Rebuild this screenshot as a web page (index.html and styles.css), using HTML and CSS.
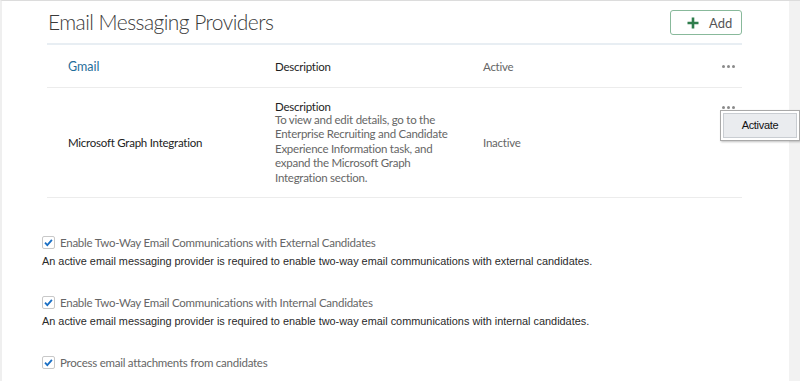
FILE: index.html
```html
<!DOCTYPE html>
<html>
  <head>
    <meta charset="utf-8" />
    <title>Email Messaging Providers</title>
    <link rel="stylesheet" href="styles.css">
  </head>
  <body>
    <div class="page">
      <div class="section-header">
        <h1>Email Messaging Providers</h1>
        <button class="add-button">
          <svg width="12" height="12" viewBox="0 0 12 12"><path d="M6 0.5v11M0.5 6h11" stroke="#2f7d4c" stroke-width="2.6"/></svg>
          <span>Add</span>
        </button>
      </div>

      <div class="provider-list">
        <div class="provider-row">
          <div class="provider-name link">Gmail</div>
          <div class="provider-desc"><div class="desc-title">Description</div></div>
          <div class="provider-status">Active</div>
          <div class="provider-actions"><span></span><span></span><span></span></div>
        </div>
        <div class="provider-row tall">
          <div class="provider-name">Microsoft Graph Integration</div>
          <div class="provider-desc">
            <div class="desc-title">Description</div>
            <div class="desc-text">To view and edit details, go to the Enterprise Recruiting and Candidate Experience Information task, and expand the Microsoft Graph Integration section.</div>
          </div>
          <div class="provider-status">Inactive</div>
          <div class="provider-actions top"><span></span><span></span><span></span></div>
        </div>
      </div>

      <div class="options">
        <div class="option">
          <label class="check"><span class="box"></span>Enable Two-Way Email Communications with External Candidates</label>
          <p class="hint">An active email messaging provider is required to enable two-way email communications with external candidates.</p>
        </div>
        <div class="option">
          <label class="check"><span class="box"></span>Enable Two-Way Email Communications with Internal Candidates</label>
          <p class="hint">An active email messaging provider is required to enable two-way email communications with internal candidates.</p>
        </div>
        <div class="option">
          <label class="check"><span class="box"></span>Process email attachments from candidates</label>
        </div>
      </div>

      <div class="popup-menu">
        <div class="popup-item">Activate</div>
      </div>
    </div>
    <div class="scroll-strip"></div>
  </body>
</html>
```

FILE: styles.css
```css
body {
  margin: 0;
  display: flex;
  height: 381px;
  overflow: hidden;
  background: #fff;
  font-family: Lato, "Open Sans", sans-serif;
  color: #333;
}

.page {
  flex: 1;
  position: relative;
  border-top: 1px solid #dcdcdc;
  border-left: 2px solid #efefef;
  padding: 0 47px 0 45px;
}

.scroll-strip {
  width: 11px;
  background: #f2f2f2;
  border-top: 1px solid #dcdcdc;
}

.section-header {
  display: flex;
  justify-content: space-between;
  align-items: center;
  height: 42px;
  border-bottom: 2px solid #e8eef3;
}

.section-header h1 {
  margin: 0 0 2px 1px;
  font-size: 21px;
  font-weight: 300;
  letter-spacing: -0.55px;
  color: #3a3a3a;
}

.add-button {
  display: flex;
  align-items: center;
  gap: 10px;
  width: 72px;
  height: 25px;
  margin-top: 1px;
  padding: 0 0 0 16px;
  border: 1px solid #88b99b;
  border-radius: 3px;
  background: #fff;
  font-family: inherit;
  font-size: 13px;
  color: #555;
}

.provider-row {
  display: grid;
  grid-template-columns: 228px 208px 1fr 40px;
  align-items: center;
  height: 42px;
  border-bottom: 1px solid #ececec;
  font-size: 11.5px;
  letter-spacing: -0.25px;
}

.provider-row.tall {
  height: 109px;
}

.provider-name {
  padding-left: 21px;
  color: #222;
}

.provider-name.link {
  color: #1f6e9a;
  font-size: 12.5px;
  letter-spacing: 0;
}

.desc-title {
  color: #1e1e1e;
}

.desc-text {
  color: #666;
  line-height: 14.5px;
  width: 176px;
}

.provider-status {
  color: #666;
}

.provider-actions {
  display: flex;
  justify-content: flex-end;
  gap: 2px;
  padding-right: 7px;
}

.provider-actions span {
  width: 3px;
  height: 3px;
  border-radius: 50%;
  background: #8a8a8a;
}

.provider-actions.top {
  align-self: start;
  padding-top: 18px;
}

.options {
  padding: 38px 0 0 0;
}

.option {
  margin-bottom: 29px;
}

.check {
  display: flex;
  align-items: center;
  gap: 5px;
  font-size: 11.5px;
  letter-spacing: -0.25px;
  color: #666;
  margin-left: -5px;
}

.box {
  width: 11px;
  height: 11px;
  border: 1px solid #c8c8c8;
  border-radius: 2px;
  background: #fff url("data:image/svg+xml,%3Csvg xmlns='http://www.w3.org/2000/svg' viewBox='0 0 12 12'%3E%3Cpath d='M2.2 6.2l2.5 2.6 5-5.6' fill='none' stroke='%231b6fc4' stroke-width='2'/%3E%3C/svg%3E") center / 11px no-repeat;
}

.hint {
  margin: 6px 0 0 -5px;
  font-family: "Liberation Sans", Arial, sans-serif;
  font-size: 10.9px;
  color: #2a2a2a;
}

.popup-menu {
  position: absolute;
  top: 109px;
  right: -11px;
  width: 74px;
  padding: 2px;
  background: #fff;
  border: 1px solid #a9a9a9;
  box-shadow: 1px 1px 2px rgba(0, 0, 0, 0.25);
}

.popup-item {
  height: 23px;
  line-height: 23px;
  text-align: center;
  background: #eaecef;
  border: 1px solid #c9cdd2;
  font-family: "Liberation Sans", Arial, sans-serif;
  font-size: 11px;
  color: #111;
  letter-spacing: -0.3px;
}
```
